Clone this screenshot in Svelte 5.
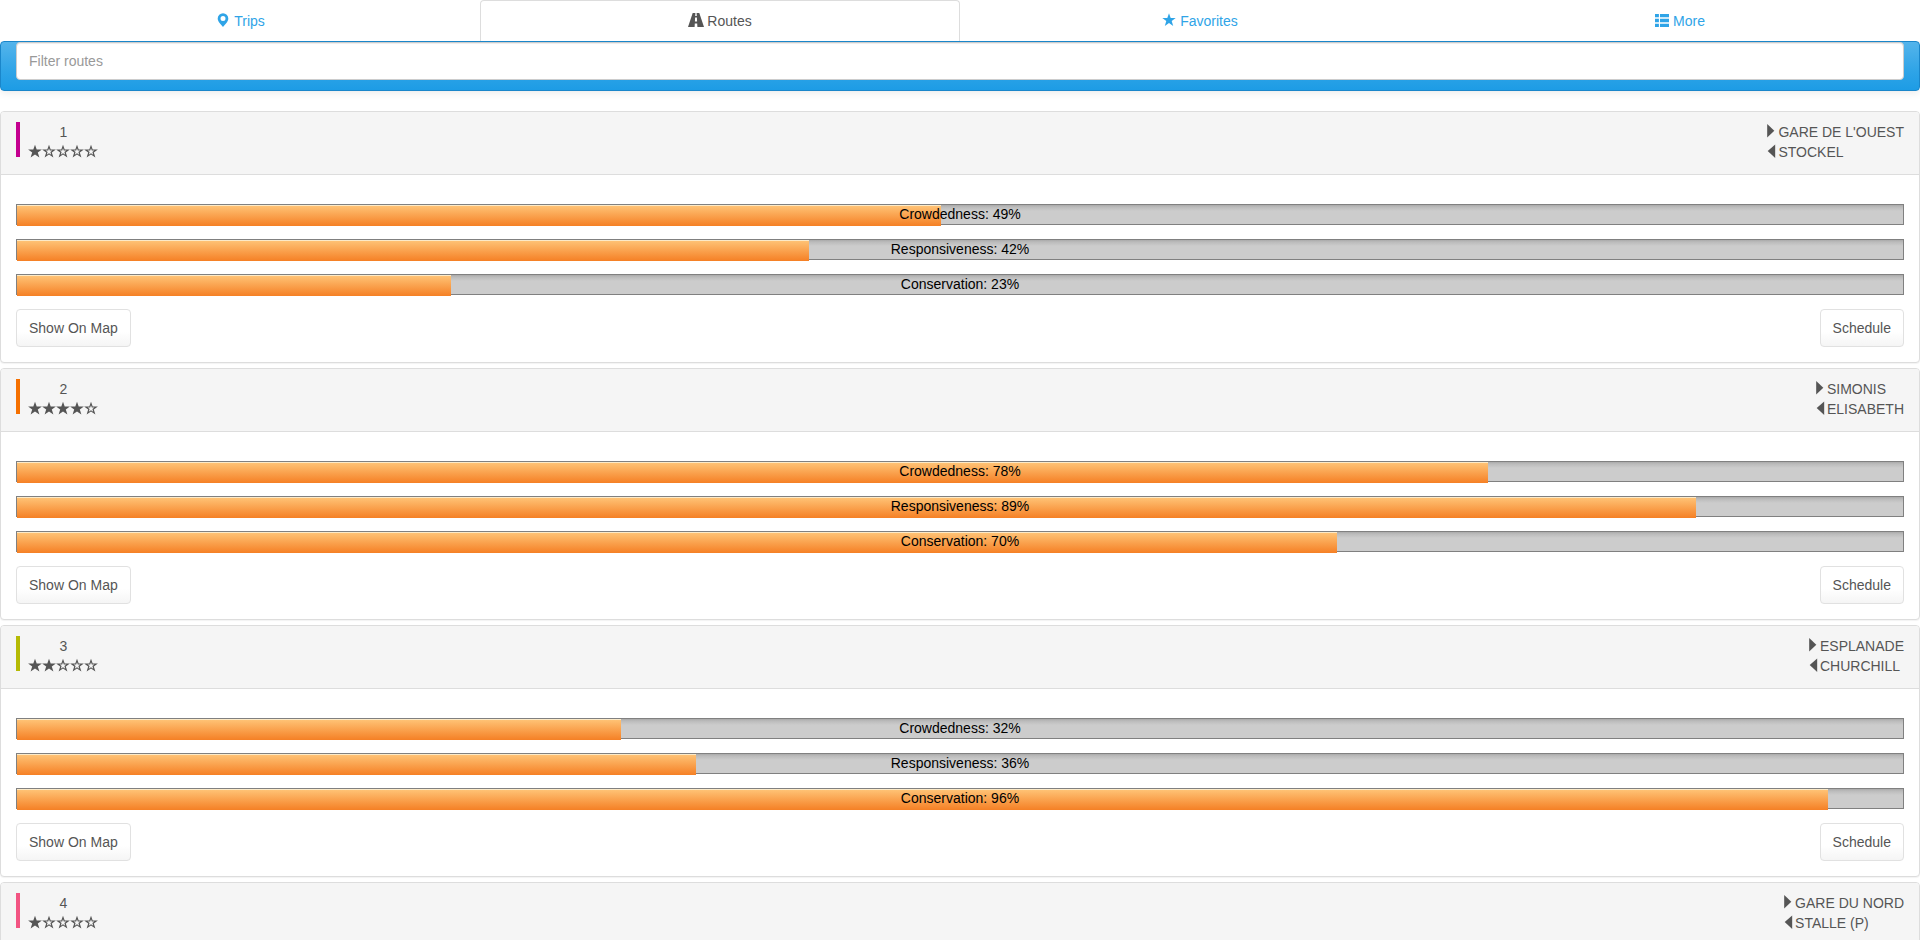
<script>
  const tabs = [
    { label: 'Trips', icon: 'pin', w: 14 },
    { label: 'Routes', icon: 'road', w: 16 },
    { label: 'Favorites', icon: 'star', w: 14 },
    { label: 'More', icon: 'list', w: 14 },
  ];
  const routes = [
    { id: 1, color: '#c4008f', stars: 1, to: "GARE DE L'OUEST", from: 'STOCKEL', stats: [49, 42, 23] },
    { id: 2, color: '#f57000', stars: 4, to: 'SIMONIS', from: 'ELISABETH', stats: [78, 89, 70] },
    { id: 3, color: '#b5ba05', stars: 2, to: 'ESPLANADE', from: 'CHURCHILL', stats: [32, 36, 96] },
    { id: 4, color: '#f25482', stars: 1, to: 'GARE DU NORD', from: 'STALLE (P)' },
  ];
  const names = ['Crowdedness', 'Responsiveness', 'Conservation'];
</script>

<div class="page">
  <ul class="tabs">
    {#each tabs as t}
      <li class="{t.icon}-tab" class:active={t.icon === 'road'}>
        <svg class={t.icon} width={t.w} height="14" viewBox="0 0 {t.w} 14">
          {#if t.icon === 'pin'}
            <path fill-rule="evenodd" d="M7 .2a5.300 5.300 0 0 0-5.300 5.300C1.700 8.700 5 11.300 7 14c2-2.700 5.300-5.300 5.300-8.500A5.300 5.300 0 0 0 7 .2zm0 2.800a2.500 2.500 0 1 1 0 5 2.500 2.500 0 0 1 0-5z" />
          {:else if t.icon === 'road'}
            <path d="M4.700 0h2.700L7.200 3h1.600L8.600 0h2.700L16 14H9.400L9.200 10.500H6.800L6.600 14H0zM7.100 4.600L6.900 8.500h2.200L8.900 4.600z" fill-rule="evenodd" />
          {:else if t.icon === 'star'}
            <path d="M7 .3l1.700 4.700h5L9.700 8l1.500 4.900L7 10l-4.200 2.900L4.300 8 .3 5h5z" />
          {:else}
            <path d="M0 1h3.900v3.300H0zM5 1h9v3.300H5zM0 5.800h3.900v3.400H0zM5 5.800h9v3.400H5zM0 10.700h3.900V14H0zM5 10.700h9V14H5z" />
          {/if}
        </svg><span>{t.label}</span>
      </li>
    {/each}
  </ul>

  <div class="navbar"><input placeholder="Filter routes" aria-label="Filter routes" /></div>

  {#each routes as r}
    <section class="panel">
      <header>
        <div class="line" style="background:{r.color}"></div>
        <div class="rating">
          <div>{r.id}</div>
          <div class="stars">
            {#each [0, 1, 2, 3, 4] as i}
              <svg width="14" height="14" viewBox="0 0 14 14">
                {#if i < r.stars}
                  <path d="M7 -.2l1.700 4.600h5.200L9.800 7.500l1.600 5.100L7 9.600l-4.400 3L4.200 7.500.1 4.400h5.200z" />
                {:else}
                  <path fill-rule="evenodd" d="M7 -.2l1.700 4.600h5.200L9.800 7.500l1.600 5.100L7 9.600l-4.400 3L4.200 7.500.1 4.400h5.200zM7 3.200L6.200 5.600H3.600L5.600 7.100 4.800 9.700 7 8.200l2.200 1.500-.8-2.600 2-1.500H7.800z" />
                {/if}
              </svg>
            {/each}
          </div>
        </div>
        <div class="ends">
          <div><svg width="12" height="14" viewBox="0 0 12 14"><path d="M1.200 0L8.300 6.700 1.200 13.500z" /></svg>{r.to}</div>
          <div><svg width="12" height="14" viewBox="0 0 12 14"><path d="M9.200 .4L1.700 7.100 9.200 13.900z" /></svg>{r.from}</div>
        </div>
      </header>
      {#if r.stats}
        <div class="body">
          {#each r.stats as value, i}
            <div class="meter">
              <div class="fill" style="width:{value}%"></div>
              <span>{names[i]}: {value}%</span>
            </div>
          {/each}
          <div class="actions"><button>Show On Map</button><button>Schedule</button></div>
        </div>
      {/if}
    </section>
  {/each}
</div>

<style>
  :global(body) { background: #fff; overflow: hidden; }
  .page { height: 940px; overflow: hidden; font: 14px/20px "Liberation Sans", Arial, sans-serif; color: #555; }
  .page * { box-sizing: border-box; }
  svg { fill: currentColor; flex: none; display: block; }
  .tabs { position: relative; z-index: 1; display: flex; height: 41px; margin: 0; padding: 0; list-style: none; color: #2fa4e7; background: #fff; }
  .tabs li { flex: none; width: 25%; display: flex; justify-content: center; padding: 11px 0 0; }
  .tabs li.active { color: #555; border: 1px solid #ddd; border-bottom: 0; border-radius: 4px 4px 0 0; padding-top: 10px; }
  .tabs .pin-tab { padding-left: 1px; }
  .tabs svg { margin: 2px 4px 0 0; }
  .tabs .road { margin-right: 3px; }
  .navbar { height: 50px; padding: 0 15px; margin-bottom: 20px; border: 1px solid #1a86ca; border-radius: 4px;
    background: linear-gradient(#54b4eb, #2fa4e7 60%, #1d9ce5); box-shadow: 0 1px 10px rgba(0, 0, 0, .1); }
  input { display: block; width: 100%; height: 38px; padding: 8px 12px; font: inherit; color: #555; border: 1px solid #ccc;
    border-radius: 4px; background: #fff; box-shadow: inset 0 1px 1px rgba(0, 0, 0, .075); outline: 0; }
  input::placeholder { color: #999; opacity: 1; }
  .panel { height: 252px; margin-bottom: 5px; border: 1px solid #ddd; border-radius: 4px; box-shadow: 0 1px 1px rgba(0, 0, 0, .05); background: #fff; }
  header { display: flex; height: 63px; padding: 10px 15px; background: #f5f5f5; border-bottom: 1px solid #ddd; border-radius: 3px 3px 0 0; }
  .line { width: 4px; height: 35px; margin-right: 8px; }
  .rating { width: 71px; text-align: center; }
  .stars { display: flex; padding-top: 3px; }
  .stars svg { overflow: visible; }
  .ends { margin-left: auto; }
  .ends div { display: flex; white-space: pre; }
  .ends svg { margin-top: 2px; }
  .body { padding: 29px 15px 0; }
  .meter { position: relative; height: 21px; margin-bottom: 14px; border: 1px solid #808080; background: linear-gradient(#aaa, #bbb 2px, #ccc 6px); }
  .fill { height: 21px; background: linear-gradient(#ffc578, #f58025); box-shadow: inset 0 1px 0 #fceac8; }
  .meter span { position: absolute; inset: -1px 0 auto; text-align: center; color: #000; }
  .actions { display: flex; justify-content: space-between; }
  button { height: 38px; padding: 8px 12px; font: inherit; line-height: 20px; color: #555; border: 1px solid #e1e1e1; border-radius: 4px;
    background: linear-gradient(#fff, #fff 60%, #f5f5f5); }
</style>
